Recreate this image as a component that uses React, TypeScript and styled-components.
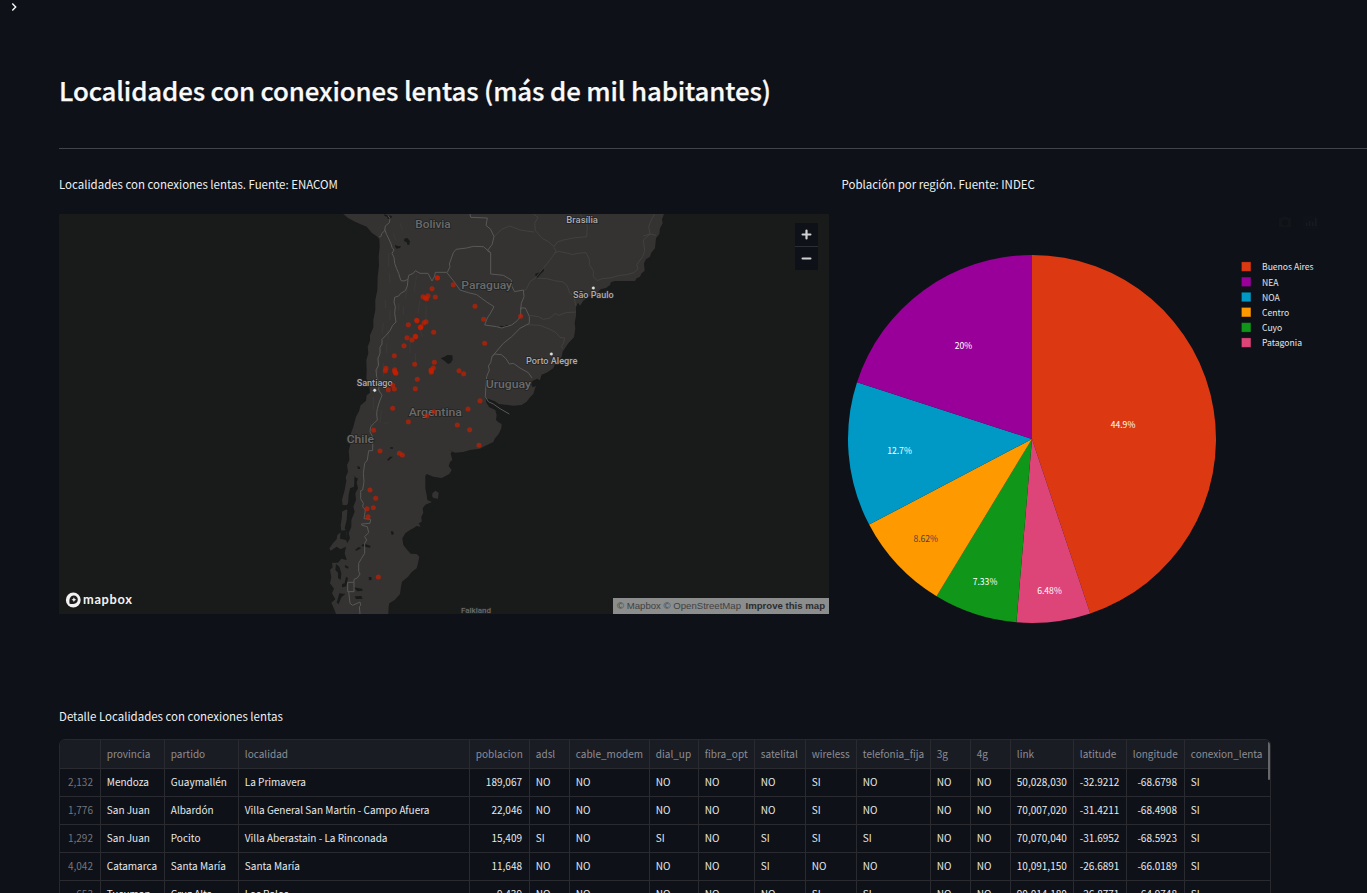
import React from 'react';
import styled, { createGlobalStyle } from 'styled-components';

const sans = '"Noto Sans CJK SC", "Noto Sans CJK JP", "Noto Sans", sans-serif';

const GlobalStyle = createGlobalStyle`
  *, *::before, *::after { box-sizing: border-box; }
  html, body { margin: 0; height: 893px; overflow: hidden; background: #0e1117; }
  body { font-family: ${sans}; color: #fafafa; }
`;

const Page = styled.div`
  height: 893px;
  overflow: hidden;
  display: flex;
  flex-direction: column;
`;

const TopBar = styled.header`
  display: flex;
  align-items: flex-start;
  height: 56px;
  padding: 2px 0 0 9px;
  flex: none;
`;

const Main = styled.main`
  padding-left: 59px;
  display: flex;
  flex-direction: column;
`;

const Title = styled.h1`
  margin: 13px 0 0;
  height: 42px;
  line-height: 42px;
  font-size: 25.8px;
  font-weight: 500;
  letter-spacing: -0.12px;
  -webkit-text-stroke: 0.25px #fafafa;
  white-space: nowrap;
`;

const Divider = styled.hr`
  width: 100%;
  height: 1px;
  margin: 37px 0 25px;
  border: 0;
  background: #41444a;
`;

const Columns = styled.div`
  display: grid;
  grid-template-columns: 770px 525px;
  column-gap: 12.6px;
  height: 532px;
`;

const Column = styled.section`
  display: flex;
  flex-direction: column;
  gap: 20px;
`;

const Caption = styled.p`
  margin: 0;
  height: 20px;
  line-height: 20px;
  font-size: 11.46px;
  color: #f0f0f1;
  white-space: nowrap;
`;

const MapFrame = styled.div`
  position: relative;
  width: 770px;
  height: 400px;
  overflow: hidden;
  background: #191a1a;
`;

const ZoomControl = styled.div`
  position: absolute;
  top: 9px;
  right: 11px;
  width: 23px;
  background: #0e1117;
`;

const ZoomButton = styled.button<{ $divided?: boolean }>`
  display: flex;
  align-items: center;
  justify-content: center;
  width: 23px;
  height: 23px;
  padding: 0;
  border: 0;
  background: none;
  ${(p) => p.$divided && 'height: 24px; border-top: 1px solid #2c2f35;'}
`;

const Logo = styled.div`
  position: absolute;
  left: 6px;
  bottom: 5px;
  display: flex;
`;

const Attribution = styled.div`
  position: absolute;
  right: 0;
  bottom: 0;
  width: 216px;
  height: 16px;
  padding: 0 4px;
  display: flex;
  justify-content: space-between;
  font: 9.6px/16px "Liberation Sans", Arial, sans-serif;
  white-space: pre;
  color: #404141;
  background: #8c8d8d;
`;

const Improve = styled.b`
  color: #2b2c2c;
`;

const Chart = styled.svg`
  display: block;
  width: 525px;
  height: 420px;
  font-family: ${sans};
`;

const TableFrame = styled.div`
  position: relative;
  width: 1212px;
  height: 170px;
  margin-top: 13px;
  border: 1px solid #26282e;
  border-radius: 6px 6px 0 0;
  overflow: hidden;
`;

const Row = styled.div<{ $head?: boolean }>`
  display: grid;
  grid-template-columns: 41px 64px 74px 231px 60px 40px 80px 49px 56px 51px 51px 74px 40px 40px 63px 53px 58px 86px;
  height: ${(p) => (p.$head ? 29 : 28)}px;
  line-height: ${(p) => (p.$head ? 27 : 25)}px;
  color: ${(p) => (p.$head ? '#8c8e93' : '#e8e9ea')};
  background: ${(p) => (p.$head ? '#1a1c24' : 'transparent')};
`;

const Cell = styled.div<{ $right?: boolean; $index?: boolean }>`
  padding: 0 7px 0 5.8px;
  border-right: 1px solid #292b31;
  border-bottom: 1px solid #292b31;
  font-size: 10.03px;
  white-space: nowrap;
  text-align: ${(p) => (p.$right ? 'right' : 'left')};
  ${(p) => p.$index && 'color: #74767c;'}
`;

const ScrollThumb = styled.div`
  position: absolute;
  top: 2px;
  right: 0;
  width: 2px;
  height: 38px;
  border-radius: 2px;
  background: #65676b;
`;

const LAND =
  'M70 12L84 24 105 35 122 43 140 50 155 68 172 80 178 88 179 110 176 140 177 165 173 200 172 240 166 270 166 300 160 330 160 352 150 376 150 392 143 410 145 430 139 450 140 480 139 505 148 530 150 548 140 556 138 572 122 586 117 604 108 620 100 650 92 672 92 700 86 722 88 750 81 765 84 785 77 802 79 812 74 840 66 870 68 885 84 886 88 893 66 905 66 920 62 945 64 965 52 975 50 988 40 998 28 1015 32 1022 50 1010 62 1018 78 1010 74 1030 80 1050 64 1046 54 1058 36 1058 38 1072 30 1080 34 1102 30 1120 42 1136 36 1150 46 1168 34 1178 42 1196 48 1212L205 1212 206 1190 208 1180 224 1170 240 1152 243 1130 246 1115 264 1100 276 1085 290 1075 294 1060 298 1040 290 1032 272 1031 262 1020 250 1005 247 985 256 970 270 960 280 955 290 948 302 950 296 940 305 935 304 920 310 908 308 895 316 884 336 876 322 870 320 855 316 835 316 798 320 792 340 800 365 804 388 792 395 780 386 768 390 756 397 750 392 730 396 725 386 720 405 728 430 726 450 720 480 716 495 708 520 696 524 686 536 672 544 655 545 642 534 636 528 630 530 616 526 600 508 592 499 578 497 565 506 567 525 574 536 582 580 587 605 585 620 575 630 562 640 552 645 535 660 510 665 494 680 488 700 475 705 462 725 440 728 425 745 400 762 382 766 355 764 340 768 318 768 290 774 278 780 287 790 272 806 260 830 250 842 238 858 234 870 225 873 217 884 213 945 213 950 205 960 200 965 190 974 182 972 160 978 148 990 140 994 128 1005 115 1008 85 1018 72 1020 55 1028 40 1026 28 1032 12Z';

const WATER = [
  'M104 798L112 808 110 820 114 835 106 850 108 870 100 890 104 905 94 930 94 950 86 970 90 985 82 1000 78 990 80 965 74 955 80 930 82 900 74 895 84 880 86 855 90 835 102 830Z',
  'M225 104L232 108 243 109 240 114 230 116 226 111Z',
  'M253 86L262 84 270 94 268 104 262 104 260 96 252 94Z',
  'M192 13L204 16 216 18 212 28 204 27 201 20 193 17Z',
  'M362 445L372 441 382 435 397 436 398 450 392 459 384 462 374 453Z',
  'M201 750L210 740 218 740 212 746 205 752Z',
  'M211 712L218 711 219 716 211 716Z',
  'M111 769L119 770 121 777 114 777Z',
  'M212 964L219 964 222 972 215 975Z',
  'M105 1020L116 1011 124 1014 110 1022Z',
  'M128 1003L138 1003 152 1008 150 1013 136 1010 124 1008Z',
  'M100 1132L126 1136 128 1142 112 1144Z',
  'M104 1159L124 1158 128 1166 108 1167Z',
  'M146 1101L154 1101 155 1110 147 1111Z',
  'M76 1065L86 1071 84 1076 74 1071Z',
  'M48 1062L58 1070 64 1090 62 1110 54 1104 54 1088 46 1080Z',
  'M78 1100L84 1104 78 1130 72 1128Z',
  'M58 1150L76 1152 64 1162 56 1182 50 1178Z',
  'M62 962L80 960 78 990 60 986Z',
  'M104 804L113 804 112 812 104 812Z',
  'M66 1122L74 1120 74 1130 66 1132Z',
  'M538 350L552 354 566 347 560 344 554 350 542 347Z',
  'M645 192L660 186 670 174 672 182 660 194 650 208 648 200Z',
  'M638 512L652 506 662 512 650 528 638 532 634 524Z',
  'M662 500L680 488 684 494 668 508Z',
];

const BORDERS = [
  // Bolivia, Peru and the Chilean ranges
  'M204 16L210 26 208 38 196 48 194 62 186 70 182 80 178 80',
  'M194 58L200 74 208 90 214 104 216 112 222 120 216 130 222 142 224 160 230 176 236 190 242 210',
  'M242 212L252 213 264 208 262 228 256 242 242 250 236 258 224 262 222 276 226 290 224 310 228 336 218 346 210 362 198 376 186 388 186 402 180 412 180 430 174 446 176 466 168 480 170 500 178 520 176 540 186 556 178 576 172 596 170 612 172 630 162 640 152 650 150 665 158 680 158 700 158 722 146 722 142 750 134 760 130 790 132 815 128 840 122 842 122 866 130 880 128 890 136 900 132 926 152 928 150 940 124 942 126 946 142 950 146 968 134 980 140 990 134 1000 134 1030 124 1046 116 1060 116 1084 120 1092 112 1104 102 1108 102 1117 83 1117 83 1145 102 1145 102 1117',
  'M86 1145L90 1180 98 1186 120 1176 122 1186 118 1190 120 1212',
  'M264 208L266 196 280 190 286 182 300 190 324 190 336 213 344 198 346 187 380 187 400 212 420 240 445 248 470 254 500 276 522 290 510 312 502 324 494 345 530 350 545 354 575 345 592 332 602 318 602 294 616 294 622 306 628 320 628 340 600 355 575 380 550 400 516 440 512 458 505 468 508 480 500 500 498 520 496 560 505 575 520 582 540 596 568 612',
  'M382 187L390 170 388 162 400 128 408 118 440 114 460 109 490 110 512 128 512 192 550 196 574 210 576 230 584 245 610 240 612 260 604 280 602 300',
  'M512 128L502 122 516 104 522 80 512 58 498 46 502 24 452 22 450 12',
  'M516 440L524 432 544 434 558 446 568 462 580 460 600 474 625 488 636 504',
];

const STATES = [
  'M640 12L654 22 644 40 646 62 668 86 684 94 702 110 712 96 730 90 760 84 800 80 802 50 798 36 780 12',
  'M522 80L545 58 570 48 600 60 642 66',
  'M702 112L708 124 690 150 672 172 646 204 630 215 620 236 612 242',
  'M702 130L715 124 745 130 758 134 772 130 798 128 808 148 808 164 820 182 820 200 832 212 846 206 870 204 900 196 920 194 942 188 954 176 950 164 968 140 974 122 970 90 990 72 986 50 994 30 1004 12',
  'M646 204L680 206 704 212 730 216 742 228 748 246 762 262 768 288',
  'M628 316L655 320 670 328 690 324 706 310 716 316 738 308 768 306',
  'M622 344L660 346 690 358 708 368 720 382 734 384 730 400 724 410 728 416',
  'M970 78L990 72 1008 76',
];

const RELIEF =
  'M206 130V170M208 190l2 30M196 270v24M210 300v30M190 340l-4 30M204 360v30M172 440v50M200 400v30M236 280v20M250 290v24M262 236l-6 30M290 196l-8 50M300 270l-6 40M318 286v50M270 380v50M286 430v40M190 460v40M300 360l8 20M240 40l8 20M220 70l8 20M160 560v40M184 600l-4 40M190 640l16-2M150 640l12 20';

const PLACES: Array<[number, number, number, number, string, boolean]> = [
  [286, 54, 106, 35.5, 'Bolivia', false],
  [424, 236, 152, 35.5, 'Paraguay', false],
  [266, 617, 160, 35.5, 'Argentina', false],
  [80, 698, 82, 35.5, 'Chile', false],
  [497, 533, 136, 35.5, 'Uruguay', false],
  [423, 1209, 90, 24, 'Falkland', false],
  [739, 38, 95, 27, 'Brasília', true],
  [759, 264, 122, 27, 'São Paulo', true],
  [618, 462, 154, 27, 'Porto Alegre', true],
  [110, 527, 108, 27, 'Santiago', true],
];

const TOWNS = [[820, 234], [694, 432], [164, 541]];

const SPOTS: number[][] = [
  [352, 203], [352, 204], [400, 224], [336, 236], [309, 260], [316, 264], [324, 257], [320, 266], [346, 261],
  [465, 289], [491, 328], [602, 319], [290, 331], [291, 332], [265, 344], [312, 338], [318, 335], [301, 352],
  [302, 353], [303, 350], [341, 367], [286, 379], [287, 380], [261, 383], [276, 390], [252, 407], [494, 400],
  [223, 437], [284, 463], [343, 457], [198, 475], [196, 482], [224, 479], [224, 484], [226, 488], [228, 490],
  [333, 480], [334, 482], [334, 487], [340, 474], [417, 482], [431, 491], [292, 508], [218, 526], [205, 539],
  [223, 537], [286, 536], [480, 572], [218, 595], [444, 597], [342, 605], [320, 617], [265, 635], [412, 645],
  [449, 659], [477, 706], [161, 661], [180, 723], [238, 730], [247, 735], [150, 840], [167, 865], [141, 896],
  [160, 893], [144, 920], [175, 1101],
];

function ArgentinaMap() {
  return (
    <svg width="770" height="400" viewBox="-783 12 2310 1200" fontFamily="Roboto, sans-serif" fontWeight="500">
      <path d={LAND} fill="#343332" />
      <path d="M338 850l8-8 10 6-2 18-14-2-4-6z" fill="#343332" />
      <path d={RELIEF} fill="none" stroke="#393836" strokeWidth="4" />
      {WATER.map((d) => <path key={d} d={d} fill="#191a1a" />)}
      {STATES.map((d) => <path key={d} d={d} fill="none" stroke="#434342" strokeWidth="2.5" />)}
      {BORDERS.map((d) => <path key={d} d={d} fill="none" stroke="#585857" strokeWidth="3" strokeLinejoin="round" />)}
      {PLACES.map(([x, y, w, size, name, city]) => (
        <text
          key={name}
          x={x}
          y={y}
          fontSize={size}
          textLength={w}
          lengthAdjust="spacingAndGlyphs"
          fill={city ? '#acacac' : '#6b6b6b'}
          stroke="#232323"
          strokeWidth="5"
          paintOrder="stroke"
        >
          {name}
        </text>
      ))}
      {TOWNS.map(([x, y]) => <circle key={x} cx={x} cy={y} r="5.5" fill="#e0e0e0" stroke="#222" strokeWidth="1.5" />)}
      {SPOTS.map(([x, y], i) => <circle key={i} cx={x} cy={y} r="7.6" fill="#c81e00" fillOpacity="0.7" />)}
    </svg>
  );
}

const SLICES = [
  { name: 'Buenos Aires', value: 44.87, color: '#dc3912', label: '44.9%', x: 281, y: 213.5, ink: '#fff' },
  { name: 'Patagonia', value: 6.48, color: '#dd4477', label: '6.48%', x: 207.5, y: 380, ink: '#fff' },
  { name: 'Cuyo', value: 7.33, color: '#109618', label: '7.33%', x: 143, y: 371, ink: '#fff' },
  { name: 'Centro', value: 8.62, color: '#ff9900', label: '8.62%', x: 83.7, y: 327.5, ink: '#444' },
  { name: 'NOA', value: 12.7, color: '#0099c6', label: '12.7%', x: 57.5, y: 240, ink: '#fff' },
  { name: 'NEA', value: 20, color: '#990099', label: '20%', x: 121.5, y: 135, ink: '#fff' },
];
const LEGEND = ['Buenos Aires', 'NEA', 'NOA', 'Centro', 'Cuyo', 'Patagonia'];

function PieChart() {
  const cx = 190;
  const cy = 225;
  const r = 184;
  let turned = 0;
  const point = (v: number) => {
    const a = (v / 100) * Math.PI * 2;
    return `${(cx + r * Math.sin(a)).toFixed(2)} ${(cy - r * Math.cos(a)).toFixed(2)}`;
  };
  return (
    <Chart viewBox="0 0 525 420">
      {SLICES.map((s) => {
        const from = turned;
        turned += s.value;
        return <path key={s.name} d={`M${cx} ${cy}L${point(from)}A${r} ${r} 0 0 1 ${point(turned)}Z`} fill={s.color} />;
      })}
      {SLICES.map((s) => (
        <text key={s.label} x={s.x} y={s.y} fontSize="8.6" textAnchor="middle" fill={s.ink}>{s.label}</text>
      ))}
      {LEGEND.map((name, i) => (
        <g key={name} transform={`translate(399 ${47.4 + i * 15.2})`}>
          <rect x="0.5" y="0.5" width="9.4" height="9.4" fill={SLICES.find((s) => s.name === name)?.color} stroke="#0e1117" strokeOpacity="0.3" strokeWidth="0.8" />
          <text x="21" y="9" fontSize="8.6" fill="#e6e6e7">{name}</text>
        </g>
      ))}
      <g fill="#12151a">
        <path d="M437 4h3l1-1.500h4l1 1.500h3v9h-12zM443 5.500a3 3 0 1 0 .01 0z" fillRule="evenodd" />
        <path d="M461 2h15v13h-15z" fill="#0f1218" />
        <path d="M464 9h1.500v3h-1.500zM467 7h1.500v5h-1.500zM470 8h1.500v4h-1.500zM473 4h1.500v8h-1.500z" fill="#171a1f" />
      </g>
    </Chart>
  );
}

const HEADERS = ['', 'provincia', 'partido', 'localidad', 'poblacion', 'adsl', 'cable_modem', 'dial_up', 'fibra_opt', 'satelital', 'wireless', 'telefonia_fija', '3g', '4g', 'link', 'latitude', 'longitude', 'conexion_lenta'];
const ROWS = [
  ['2,132', 'Mendoza', 'Guaymallén', 'La Primavera', '189,067', 'NO', 'NO', 'NO', 'NO', 'NO', 'SI', 'NO', 'NO', 'NO', '50,028,030', '-32.9212', '-68.6798', 'SI'],
  ['1,776', 'San Juan', 'Albardón', 'Villa General San Martín - Campo Afuera', '22,046', 'NO', 'NO', 'NO', 'NO', 'NO', 'SI', 'NO', 'NO', 'NO', '70,007,020', '-31.4211', '-68.4908', 'SI'],
  ['1,292', 'San Juan', 'Pocito', 'Villa Aberastain - La Rinconada', '15,409', 'SI', 'NO', 'SI', 'NO', 'SI', 'SI', 'SI', 'NO', 'NO', '70,070,040', '-31.6952', '-68.5923', 'SI'],
  ['4,042', 'Catamarca', 'Santa María', 'Santa María', '11,648', 'NO', 'NO', 'NO', 'NO', 'SI', 'NO', 'NO', 'NO', 'NO', '10,091,150', '-26.6891', '-66.0189', 'SI'],
  ['653', 'Tucuman', 'Cruz Alta', 'Los Ralos', '9,439', 'NO', 'NO', 'NO', 'NO', 'NO', 'SI', 'SI', 'NO', 'NO', '90,014,180', '-26.8771', '-64.9748', 'SI'],
];
const NUMERIC = [0, 4, 16];

export default function App() {
  return (
    <Page>
      <GlobalStyle />
      <TopBar>
        <svg width="10" height="10" viewBox="0 0 10 10" fill="none" stroke="#fafafa" strokeWidth="1.4">
          <path d="M3.300 1.600L6.700 5 3.300 8.400" />
        </svg>
      </TopBar>
      <Main>
        <Title>Localidades con conexiones lentas (más de mil habitantes)</Title>
        <Divider />
        <Columns>
          <Column>
            <Caption>Localidades con conexiones lentas. Fuente: ENACOM</Caption>
            <MapFrame>
              <ArgentinaMap />
              <ZoomControl>
                <ZoomButton aria-label="Zoom in">
                  <svg width="11" height="11" viewBox="0 0 11 11" stroke="#d0d1d2" strokeWidth="2.200" strokeLinecap="round">
                    <path d="M5.500 1.600v7.800M1.600 5.500h7.800" />
                  </svg>
                </ZoomButton>
                <ZoomButton $divided aria-label="Zoom out">
                  <svg width="11" height="11" viewBox="0 0 11 11" stroke="#d0d1d2" strokeWidth="2.200" strokeLinecap="round">
                    <path d="M1.600 5.500h7.800" />
                  </svg>
                </ZoomButton>
              </ZoomControl>
              <Logo>
                <svg width="70" height="18" viewBox="0 0 70 18">
                  <circle cx="8.300" cy="9" r="7.400" fill="#f2f2f2" />
                  <path d="M4.600 12.700C3.800 9 4.800 4.800 8.800 4.600a4 4 0 0 1 4 4.100C12.600 12.600 8.500 13.600 4.600 12.700z" fill="#1c1d1d" />
                  <path d="M8.900 6.300l.8 1.600 1.600.8-1.600.8-.8 1.600-.8-1.600-1.600-.8 1.600-.8z" fill="#f2f2f2" />
                  <text x="18" y="13" fontFamily="Lato, sans-serif" fontSize="12.800" fontWeight="700" fill="#f2f2f2" textLength="49">mapbox</text>
                </svg>
              </Logo>
              <Attribution>
                <span>© Mapbox © OpenStreetMap</span>
                <Improve>Improve this map</Improve>
              </Attribution>
            </MapFrame>
          </Column>
          <Column>
            <Caption>Población por región. Fuente: INDEC</Caption>
            <PieChart />
          </Column>
        </Columns>
        <Caption>Detalle Localidades con conexiones lentas</Caption>
        <TableFrame>
          <Row $head>
            {HEADERS.map((h, i) => <Cell key={i} $right={NUMERIC.includes(i)}>{h}</Cell>)}
          </Row>
          {ROWS.map((row) => (
            <Row key={row[0]}>
              {row.map((v, i) => <Cell key={i} $index={i === 0} $right={NUMERIC.includes(i)}>{v}</Cell>)}
            </Row>
          ))}
          <ScrollThumb />
        </TableFrame>
      </Main>
    </Page>
  );
}
